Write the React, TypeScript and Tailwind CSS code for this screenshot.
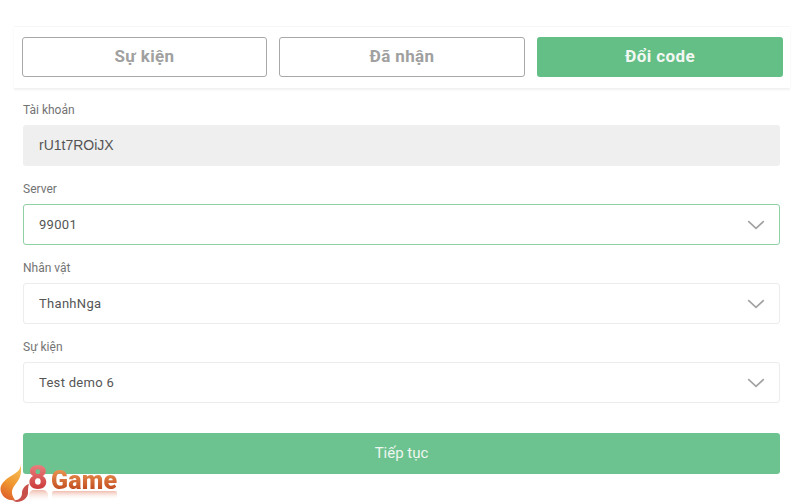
import React from "react";

function Chevron() {
  return (
    <svg width="18" height="10" viewBox="0 0 18 10" fill="none" className="shrink-0">
      <path d="M1.2 1.2 L9 8.4 L16.8 1.2" stroke="#a3a3a3" strokeWidth="1.7" />
    </svg>
  );
}

function Tab({ label, width, active }: { label: string; width: string; active?: boolean }) {
  return (
    <div
      className={
        active
          ? `flex h-10 ${width} items-center justify-center rounded-[3px] bg-[#63bf85] text-[17px] font-bold tracking-[0.4px] text-[#f2f7f3]`
          : `flex h-10 ${width} items-center justify-center rounded-[3px] border border-[#a8a8a8] bg-white text-[17px] font-bold tracking-[0.4px] text-[#a0a0a0]`
      }
    >
      {label}
    </div>
  );
}

function Field({ label, value, focused }: { label: string; value: string; focused?: boolean }) {
  return (
    <div className="flex flex-col">
      <div className="h-[15px] text-[12px] leading-[15px] text-[#737373]">{label}</div>
      <div
        className={
          focused
            ? "mt-[7px] flex h-[41px] items-center justify-between rounded-[3px] border border-[#8fd0a5] bg-white pl-[15px] pr-[14px] text-[13px] tracking-[0.3px] text-[#555555]"
            : "mt-[7px] flex h-[41px] items-center justify-between rounded-[3px] border border-[#ececec] bg-white pl-[15px] pr-[14px] text-[13px] tracking-[0.3px] text-[#555555]"
        }
      >
        <span>{value}</span>
        <Chevron />
      </div>
    </div>
  );
}

function Logo() {
  return (
    <div className="absolute bottom-0 left-0 h-[46px] w-[120px] overflow-hidden">
      <svg width="120" height="46" viewBox="0 0 120 46" className="absolute left-0 top-0">
        <defs>
          <linearGradient id="flame" x1="0.6" y1="0" x2="0.3" y2="1">
            <stop offset="0" stopColor="#f7c15a" />
            <stop offset="0.55" stopColor="#f0962f" />
            <stop offset="1" stopColor="#dd5f2c" />
          </linearGradient>
          <linearGradient id="fade" x1="0" y1="0" x2="0" y2="1">
            <stop offset="0" stopColor="#e9a08c" stopOpacity="0.7" />
            <stop offset="1" stopColor="#ffffff" stopOpacity="0" />
          </linearGradient>
        </defs>
        <path
          d="M20 6 C22 13 18 16 11 20 C3 25 -1 30 1 36 C3 42 9 45 15 44 C12 40 11 36 13 32 C16 26 24 22 20 6 Z"
          fill="url(#flame)"
        />
        <path
          d="M13 44 C18 45 22 42 22 37 C22 33 25 29 29 28 C28 31 28 33 28 37 C28 42 22 46 17 46 C15 46 14 45 13 44 Z"
          fill="#c9504a"
        />
        <rect x="29" y="34" width="19" height="12" rx="5" fill="url(#fade)" />
        <rect x="52" y="35" width="65" height="9" rx="2" fill="url(#fade)" />
      </svg>
      <span className="absolute left-[28px] top-[4px] bg-gradient-to-b from-[#f08a8c] to-[#c4242a] bg-clip-text text-[34px] font-black leading-[34px] text-transparent">
        8
      </span>
      <span className="absolute left-[51px] top-[12px] bg-gradient-to-b from-[#ee9a55] to-[#b83a12] bg-clip-text text-[25px] font-black leading-[26px] tracking-[0.2px] text-transparent">
        Game
      </span>
    </div>
  );
}

export default function App() {
  return (
    <div
      className="relative h-[502px] w-[800px] overflow-hidden bg-white pt-[26px]"
      style={{ fontFamily: '"Roboto", "Liberation Sans", sans-serif' }}
    >
      <div className="ml-[14px] flex h-[62px] w-[776px] gap-[12px] border-t border-[#f7f7f7] pl-[8px] pt-[10px] shadow-[0_2px_2px_rgba(0,0,0,0.06)]">
        <Tab label="Sự kiện" width="w-[245px]" />
        <Tab label="Đã nhận" width="w-[246px]" />
        <Tab label="Đổi code" width="w-[246px]" active />
      </div>
      <div className="ml-[23px] mt-[15px] w-[757px]">
        <div className="flex flex-col">
          <div className="h-[15px] text-[12px] leading-[15px] text-[#737373]">Tài khoản</div>
          <div className="mt-[7px] flex h-[41px] items-center rounded-[3px] bg-[#efefef] pl-[16px] font-['Liberation_Sans'] text-[14px] text-[#555555]">
            rU1t7ROiJX
          </div>
        </div>
        <div className="mt-[16px] flex flex-col gap-[16px]">
          <Field label="Server" value="99001" focused />
          <Field label="Nhân vật" value="ThanhNga" />
          <Field label="Sự kiện" value="Test demo 6" />
        </div>
        <div className="mt-[30px] flex h-[41px] items-center justify-center rounded-[3px] bg-[#6dc38f] text-[15px] font-normal text-[#eef6f0]">
          Tiếp tục
        </div>
      </div>
      <Logo />
    </div>
  );
}
